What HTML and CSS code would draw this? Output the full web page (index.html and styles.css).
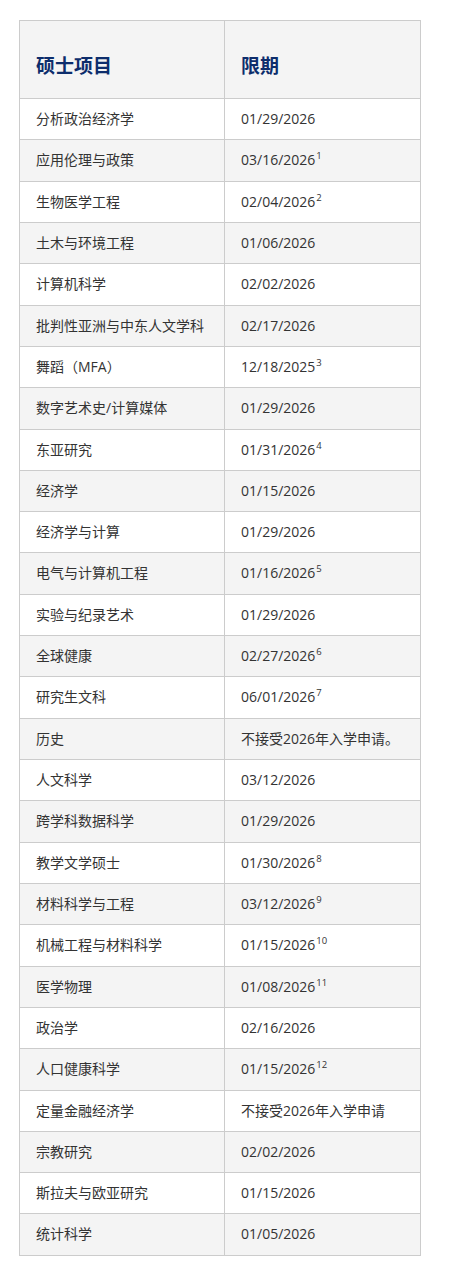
FILE: index.html
```html
<!DOCTYPE html>
<html lang="zh">
<head>
<meta charset="utf-8">
<link rel="stylesheet" href="styles.css">
</head>
<body>
<div class="wrap">
<table class="deadlines">
<colgroup><col class="c1"><col class="c2"></colgroup>
<thead>
<tr><th>硕士项目</th><th>限期</th></tr>
</thead>
<tbody>
<tr><td>分析政治经济学</td><td>01/29/2026</td></tr>
<tr><td>应用伦理与政策</td><td>03/16/2026<sup>1</sup></td></tr>
<tr><td>生物医学工程</td><td>02/04/2026<sup>2</sup></td></tr>
<tr><td>土木与环境工程</td><td>01/06/2026</td></tr>
<tr><td>计算机科学</td><td>02/02/2026</td></tr>
<tr><td>批判性亚洲与中东人文学科</td><td>02/17/2026</td></tr>
<tr><td>舞蹈（MFA）</td><td>12/18/2025<sup>3</sup></td></tr>
<tr><td>数字艺术史/计算媒体</td><td>01/29/2026</td></tr>
<tr><td>东亚研究</td><td>01/31/2026<sup>4</sup></td></tr>
<tr><td>经济学</td><td>01/15/2026</td></tr>
<tr><td>经济学与计算</td><td>01/29/2026</td></tr>
<tr><td>电气与计算机工程</td><td>01/16/2026<sup>5</sup></td></tr>
<tr><td>实验与纪录艺术</td><td>01/29/2026</td></tr>
<tr><td>全球健康</td><td>02/27/2026<sup>6</sup></td></tr>
<tr><td>研究生文科</td><td>06/01/2026<sup>7</sup></td></tr>
<tr><td>历史</td><td>不接受2026年入学申请。</td></tr>
<tr><td>人文科学</td><td>03/12/2026</td></tr>
<tr><td>跨学科数据科学</td><td>01/29/2026</td></tr>
<tr><td>教学文学硕士</td><td>01/30/2026<sup>8</sup></td></tr>
<tr><td>材料科学与工程</td><td>03/12/2026<sup>9</sup></td></tr>
<tr><td>机械工程与材料科学</td><td>01/15/2026<sup>10</sup></td></tr>
<tr><td>医学物理</td><td>01/08/2026<sup>11</sup></td></tr>
<tr><td>政治学</td><td>02/16/2026</td></tr>
<tr><td>人口健康科学</td><td>01/15/2026<sup>12</sup></td></tr>
<tr><td>定量金融经济学</td><td>不接受2026年入学申请</td></tr>
<tr><td>宗教研究</td><td>02/02/2026</td></tr>
<tr><td>斯拉夫与欧亚研究</td><td>01/15/2026</td></tr>
<tr><td>统计科学</td><td>01/05/2026</td></tr>
</tbody>
</table>
</div>
</body>
</html>
```
FILE: styles.css
```css
html, body {
  margin: 0;
  padding: 0;
  background: #ffffff;
}
.wrap {
  padding: 20px 0 14px 19px;
}
.deadlines {
  border-collapse: collapse;
  table-layout: fixed;
  width: 401px;
  font-family: "Open Sans", "Noto Sans CJK SC", sans-serif;
  font-size: 14px;
  color: #333333;
}
.c1 { width: 205px; }
.c2 { width: 196px; }
.deadlines th,
.deadlines td {
  border: 1px solid #cccccc;
  text-align: left;
  vertical-align: middle;
}
.deadlines th {
  background: #f4f4f4;
  color: #0d2d6c;
  font-size: 19px;
  font-weight: 700;
  line-height: 28px;
  padding: 31px 16px 18px;
}
.deadlines td {
  padding: 10px 16px;
  line-height: 20.32px;
  height: 20.32px;
}
.deadlines tbody tr:nth-child(even) td {
  background: #f4f4f4;
}
.deadlines sup {
  font-size: 9.5px;
  line-height: 0;
  vertical-align: 6px;
  margin-left: 1px;
}
```
